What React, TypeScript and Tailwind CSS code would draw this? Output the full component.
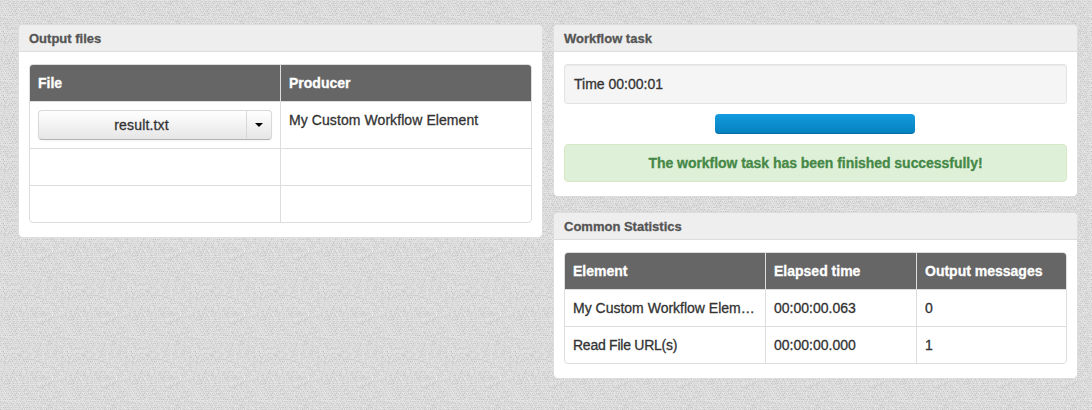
import React from "react";

// Deterministic woven texture, one shade per pixel of a repeating tile.
const TILE = 64;
const shades = ["#c3c3c3", "#cccccc", "#d4d4d4", "#dbdbdb", "#e1e1e1", "#e6e6e6"];
const threads: string[] = shades.map(() => "");

function noiseAt(x: number, y: number) {
  let h = Math.imul(x + 11, 374761393) ^ Math.imul(y + 5, 668265263);
  h = Math.imul(h ^ (h >>> 13), 1274126177);
  return ((h ^ (h >>> 16)) >>> 0) / 4294967296;
}

for (let y = 0; y < TILE; y++) {
  for (let x = 0; x < TILE; x++) {
    const weave = y % 2 === 0 ? 2.4 : (x + (y >> 1)) % 2 === 0 ? 0.2 : 2.2;
    const level = Math.min(5, Math.floor(noiseAt(x, y) * 3.4 + weave));
    threads[level] += `M${x} ${y}h1v1h-1z`;
  }
}

function Texture() {
  return (
    <svg className="absolute inset-0 h-full w-full" shapeRendering="crispEdges" aria-hidden="true">
      <pattern id="weave" width={TILE} height={TILE} patternUnits="userSpaceOnUse">
        {threads.map((d, i) => (
          <path key={i} d={d} fill={shades[i]} />
        ))}
      </pattern>
      <rect width="100%" height="100%" fill="url(#weave)" />
    </svg>
  );
}

function Panel({ title, className, children }: { title: string; className: string; children: React.ReactNode }) {
  return (
    <section className={`w-[525px] overflow-hidden rounded-[5px] border border-[#ddd] bg-white ${className}`}>
      <h2 className="h-[27px] border-b border-[#ddd] bg-[#eee] px-2.5 text-[13px] leading-[27px] font-bold text-[#555]">
        {title}
      </h2>
      <div className="px-2.5 pt-3">{children}</div>
    </section>
  );
}

function Table({ columns, head, rows }: { columns: string; head: string[]; rows: React.ReactNode[][] }) {
  return (
    <div className="overflow-hidden rounded border border-[#ddd]">
      <div className={`grid bg-[#666] font-bold text-white ${columns}`}>
        {head.map((h) => (
          <div key={h} className="border-l border-[#ddd] p-2 first:border-l-0">
            {h}
          </div>
        ))}
      </div>
      {rows.map((row, i) => (
        <div key={i} className={`grid border-t border-[#ddd] ${columns}`}>
          {row.map((cell, j) => (
            <div key={j} className="min-h-9 truncate border-l border-[#ddd] p-2 first:border-l-0">
              {cell}
            </div>
          ))}
        </div>
      ))}
    </div>
  );
}

function FileButton() {
  return (
    <div className="flex h-[30px] w-[234px] rounded border border-[#d9d9d9] border-b-[#b3b3b3] bg-gradient-to-b from-white to-[#e6e6e6] shadow-[0_1px_2px_rgba(0,0,0,0.05)]">
      <button className="w-[207px] pr-0.5 leading-7 tracking-[0.15px]">result.txt</button>
      <button aria-label="More actions" className="flex flex-1 items-center justify-center border-l border-[#d9d9d9]">
        <span className="border-x-4 border-t-4 border-x-transparent border-t-black" />
      </button>
    </div>
  );
}

export default function App() {
  return (
    <main className="relative h-[410px] w-[1092px] overflow-hidden bg-[#d9d9d9] font-['Liberation_Sans',Arial,sans-serif] text-[14px] leading-5 text-[#333] [-webkit-text-stroke:0.3px]">
      <Texture />
      <div className="relative flex items-start gap-2.5 pt-6 pl-[18px]">
        <Panel title="Output files" className="h-[214px]">
          <Table
            columns="grid-cols-[250px_251px]"
            head={["File", "Producer"]}
            rows={[
              [
                <FileButton key="file" />,
                <span key="producer" className="tracking-[0.08px]">
                  My Custom Workflow Element
                </span>,
              ],
              ["", ""],
              ["", ""],
            ]}
          />
        </Panel>
        <div className="flex flex-col gap-[15px]">
          <Panel title="Workflow task" className="h-[173px]">
            <div className="flex flex-col gap-2.5">
              <div className="h-10 rounded-[3px] border border-[#e3e3e3] bg-[#f5f5f5] px-[9px] py-[9px] shadow-[inset_0_1px_1px_rgba(0,0,0,0.05)]">
                Time 00:00:01
              </div>
              <div className="mr-px h-5 w-[200px] self-center rounded bg-gradient-to-b from-[#149bdf] to-[#0480be] shadow-[inset_0_-1px_0_rgba(0,0,0,0.15)]" />
              <div className="h-[38px] rounded border border-[#d6e9c6] bg-[#dff0d8] py-2 text-center font-bold tracking-[-0.04px] text-[#468847]">
                The workflow task has been finished successfully!
              </div>
            </div>
          </Panel>
          <Panel title="Common Statistics" className="h-[167px]">
            <Table
              columns="grid-cols-[200px_151px_150px]"
              head={["Element", "Elapsed time", "Output messages"]}
              rows={[
                ["My Custom Workflow Element", "00:00:00.063", "0"],
                [
                  <span key="reader" className="tracking-[-0.25px]">
                    Read File URL(s)
                  </span>,
                  "00:00:00.000",
                  "1",
                ],
              ]}
            />
          </Panel>
        </div>
      </div>
    </main>
  );
}
